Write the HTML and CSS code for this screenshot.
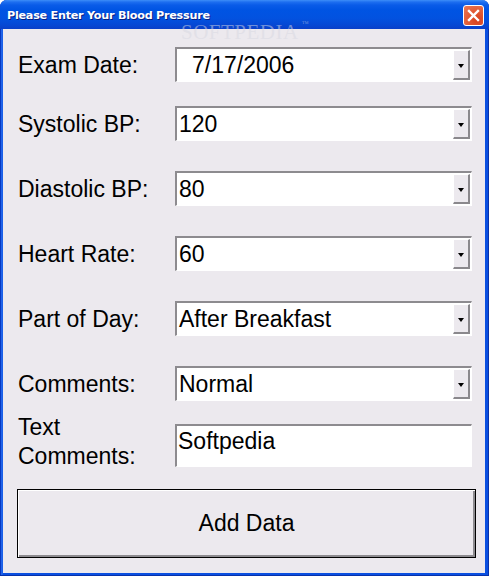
FILE: index.html
```html
<!DOCTYPE html>
<html>
<head>
<meta charset="utf-8">
<link rel="stylesheet" href="styles.css">
</head>
<body>
<div class="window">
  <div class="titlebar">
    <span class="title">Please Enter Your Blood Pressure</span>
    <span class="close"><svg width="13" height="13" viewBox="0 0 13 13"><path d="M2 2 L11 11 M11 2 L2 11" stroke="#fff" stroke-width="2.4" stroke-linecap="square"/></svg></span>
  </div>
  <div class="watermark">SOFTPEDIA<sup>™</sup></div>
  <div class="content">
    <div class="form">
      <div class="row row-first">
        <label class="label">Exam Date:</label>
        <div class="combo"><span class="value value-date">7/17/2006</span><span class="drop"><i class="arrow"></i></span></div>
      </div>
      <div class="row">
        <label class="label">Systolic BP:</label>
        <div class="combo"><span class="value">120</span><span class="drop"><i class="arrow"></i></span></div>
      </div>
      <div class="row">
        <label class="label">Diastolic BP:</label>
        <div class="combo"><span class="value">80</span><span class="drop"><i class="arrow"></i></span></div>
      </div>
      <div class="row">
        <label class="label">Heart Rate:</label>
        <div class="combo"><span class="value">60</span><span class="drop"><i class="arrow"></i></span></div>
      </div>
      <div class="row">
        <label class="label">Part of Day:</label>
        <div class="combo"><span class="value">After Breakfast</span><span class="drop"><i class="arrow"></i></span></div>
      </div>
      <div class="row">
        <label class="label">Comments:</label>
        <div class="combo"><span class="value">Normal</span><span class="drop"><i class="arrow"></i></span></div>
      </div>
      <div class="row row-text">
        <label class="label label-two">Text<br>Comments:</label>
        <div class="textbox"><span class="value">Softpedia</span></div>
      </div>
    </div>
    <button class="button">Add Data</button>
  </div>
</div>
</body>
</html>
```
FILE: styles.css
```css
* { box-sizing: border-box; }
html, body { margin: 0; padding: 0; background: #ffffff; }
.window {
  position: relative;
  width: 489px;
  height: 576px;
  background: linear-gradient(to right, #0842d6 0, #2a6ff0 2px, #0a4fe0 3px);
  border-radius: 7px 7px 0 0;
  display: flex;
  flex-direction: column;
  padding: 0 4px 3px 3px;
  box-shadow: inset -1px -1px 0 #0831a9, inset 1px 0 0 #0838c0;
}
.titlebar {
  height: 29px;
  margin: 0 -4px 0 -3px;
  padding: 0 5px 0 7px;
  display: flex;
  align-items: center;
  justify-content: space-between;
  border-radius: 7px 7px 0 0;
  background: linear-gradient(to bottom, #3d8ef8 0, #1e6ff0 2px, #0a5ce8 5px, #0054e3 10px, #0252e0 18px, #0648d4 25px, #0a3fc8 29px);
}
.title {
  font-family: "DejaVu Sans", Verdana, sans-serif;
  font-weight: bold;
  font-size: 11.2px;
  letter-spacing: -0.25px;
  color: #ffffff;
  text-shadow: 1px 1px 0 #0a2080;
  margin-top: 1px;
}
.close {
  width: 21px;
  height: 21px;
  margin-top: 2px;
  border: 1px solid #ffffff;
  border-radius: 3px;
  background: radial-gradient(circle at 70% 75%, #d8401c 0, #e25c36 50%, #e97a58 100%);
  display: flex;
  align-items: center;
  justify-content: center;
}
.watermark {
  position: absolute;
  left: 181px;
  top: 20px;
  font-family: "Liberation Serif", serif;
  font-size: 21px;
  letter-spacing: 0.5px;
  color: rgba(215, 215, 225, 0.5);
  pointer-events: none;
}
.watermark sup { font-size: 7px; vertical-align: 13px; margin-left: 3px; }
.content {
  flex: 1;
  background: #ece9ee;
  padding: 18px 9px 14px 14px;
  display: flex;
  flex-direction: column;
}
.form {
  display: flex;
  flex-direction: column;
  gap: 30px;
}
.row {
  display: grid;
  grid-template-columns: 158px 297px;
  align-items: center;
  height: 35px;
}
.row-first { margin-bottom: -6px; }
.row-text {
  height: auto;
  align-items: start;
  margin-top: -18px;
}
.label {
  font-family: "Liberation Sans", Arial, sans-serif;
  font-size: 23px;
  color: #000;
  padding-left: 1px;
  padding-top: 2px;
}
.label-two { line-height: 29px; padding-top: 0; }
.combo {
  height: 35px;
  display: flex;
  align-items: stretch;
  background: #ffffff;
  border-style: solid;
  border-width: 2px 1px 1px 2px;
  border-color: #8d8b8f #ffffff #ffffff #8d8b8f;
  padding: 1px 1px 1px 0;
}
.value {
  flex: 1;
  font-family: "Liberation Sans", Arial, sans-serif;
  font-size: 23px;
  color: #000;
  display: flex;
  align-items: center;
  padding-left: 2px;
}
.value-date { padding-left: 15px; }
.drop {
  width: 17px;
  background: #ece9ee;
  border-style: solid;
  border-width: 1px 2px 2px 1px;
  border-color: #ffffff #8a888c #8a888c #ffffff;
  display: flex;
  align-items: center;
  justify-content: center;
}
.arrow {
  width: 0;
  height: 0;
  border-left: 3.5px solid transparent;
  border-right: 3.5px solid transparent;
  border-top: 4px solid #000;
  margin-top: 2px;
}
.textbox {
  height: 43px;
  margin-top: 11px;
  background: #ffffff;
  border-style: solid;
  border-width: 2px 1px 1px 2px;
  border-color: #8d8b8f #ffffff #ffffff #8d8b8f;
  display: flex;
  align-items: flex-start;
}
.textbox .value { padding-top: 2px; padding-left: 1px; }
.button {
  margin-top: 18px;
  height: 69px;
  width: 459px;
  margin-left: 0;
  background: #ece9ee;
  border: 1px solid #000;
  box-shadow: inset 1px 1px 0 #ffffff, inset -2px -2px 0 #8d8b8f;
  font-family: "Liberation Sans", Arial, sans-serif;
  font-size: 23px;
  color: #000;
  padding: 0;
}
```
